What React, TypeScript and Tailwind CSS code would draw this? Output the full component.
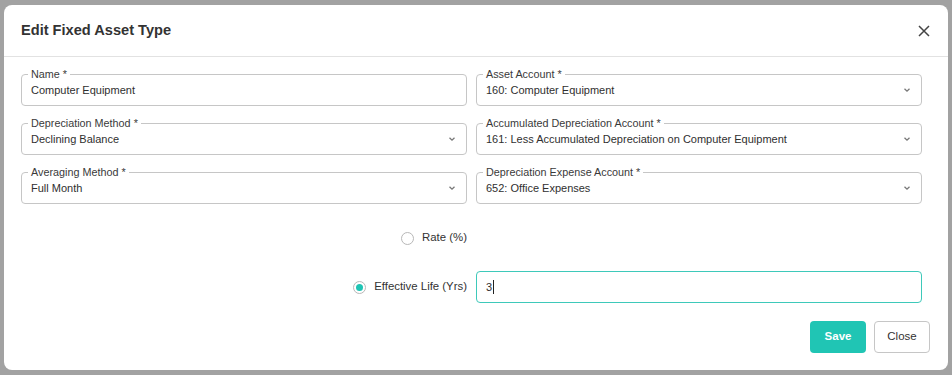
import React from 'react';

type FieldProps = {
    label: string;
    value: string;
    select?: boolean;
};

// outlined field with floating label on the border
const Field: React.FC<FieldProps> = ({ label, value, select }) => (
    <div className="relative h-[32px] rounded-[4px] border border-[#c6c6c6] flex items-center pl-[9px] pr-[10px]">
        <span className="absolute -top-[8px] left-[6px] bg-white px-[3px] text-[10.8px] leading-[14px] text-[#3a3a3a]">
            {label}
        </span>
        <span className="flex-1 text-[11px] text-[#2f2f2f] pt-[1px]">{value}</span>
        {select && (
            <svg width="8" height="6" viewBox="0 0 8 6" className="text-[#777]">
                <path d="M1.5 1.8 L4 4.2 L6.5 1.8" fill="none" stroke="currentColor" strokeWidth="1.3" />
            </svg>
        )}
    </div>
);

const Radio: React.FC<{ label: string; checked?: boolean }> = ({ label, checked }) => (
    <div className="h-[32px] flex items-center justify-end gap-[8px]">
        <span className="w-[13px] h-[13px] rounded-full border border-[#b8b8b8] flex items-center justify-center">
            {checked && <span className="w-[7px] h-[7px] rounded-full bg-[#1fc4b4]" />}
        </span>
        <span className="text-[11.4px] text-[#333]">{label}</span>
    </div>
);

export default function App() {
    return (
        <div
            className="w-[952px] h-[375px] bg-[#a2a2a2] pt-[5px] pl-[4px]"
            style={{ fontFamily: '"Liberation Sans", Arial, sans-serif' }}
        >
            <div className="w-[944px] h-[365px] bg-white rounded-[8px] flex flex-col">
                {/* Header */}
                <div className="h-[52px] flex items-center justify-between pl-[17px] pr-[18px] border-b border-[#e2e2e2]">
                    <h2 className="text-[14.6px] font-bold text-[#333] pt-[1px]">Edit Fixed Asset Type</h2>
                    <svg width="12" height="12" viewBox="0 0 12 12" className="text-[#444]">
                        <path d="M1 1 L11 11 M11 1 L1 11" stroke="currentColor" strokeWidth="1.5" />
                    </svg>
                </div>

                {/* Body */}
                <div className="pt-[17px] pl-[17px] pr-[26px]">
                    <div className="grid grid-cols-2 gap-x-[9px] gap-y-[17px]">
                        <Field label="Name *" value="Computer Equipment" />
                        <Field label="Asset Account *" value="160: Computer Equipment" select />
                        <Field label="Depreciation Method *" value="Declining Balance" select />
                        <Field label="Accumulated Depreciation Account *" value="161: Less Accumulated Depreciation on Computer Equipment" select />
                        <Field label="Averaging Method *" value="Full Month" select />
                        <Field label="Depreciation Expense Account *" value="652: Office Expenses" select />
                    </div>

                    <div className="grid grid-cols-2 gap-x-[9px] gap-y-[17px] mt-[18px]">
                        <Radio label="Rate (%)" />
                        <div />

                        <Radio label="Effective Life (Yrs)" checked />
                        <div className="h-[32px] rounded-[4px] border border-[#3ec9ba] flex items-center pl-[9px] text-[11px] text-[#2f2f2f]">
                            3<span className="inline-block w-px h-[14px] bg-[#222] ml-px" />
                        </div>
                    </div>
                </div>

                {/* Footer */}
                <div className="flex justify-end gap-[8px] pt-[18px] pr-[18px]">
                    <button className="w-[56px] h-[32px] rounded-[4px] bg-[#20c5b4] text-white text-[11.5px] font-bold">
                        Save
                    </button>
                    <button className="w-[56px] h-[32px] rounded-[4px] border border-[#c6c6c6] bg-white text-[#333] text-[11.5px]">
                        Close
                    </button>
                </div>
            </div>
        </div>
    );
}
